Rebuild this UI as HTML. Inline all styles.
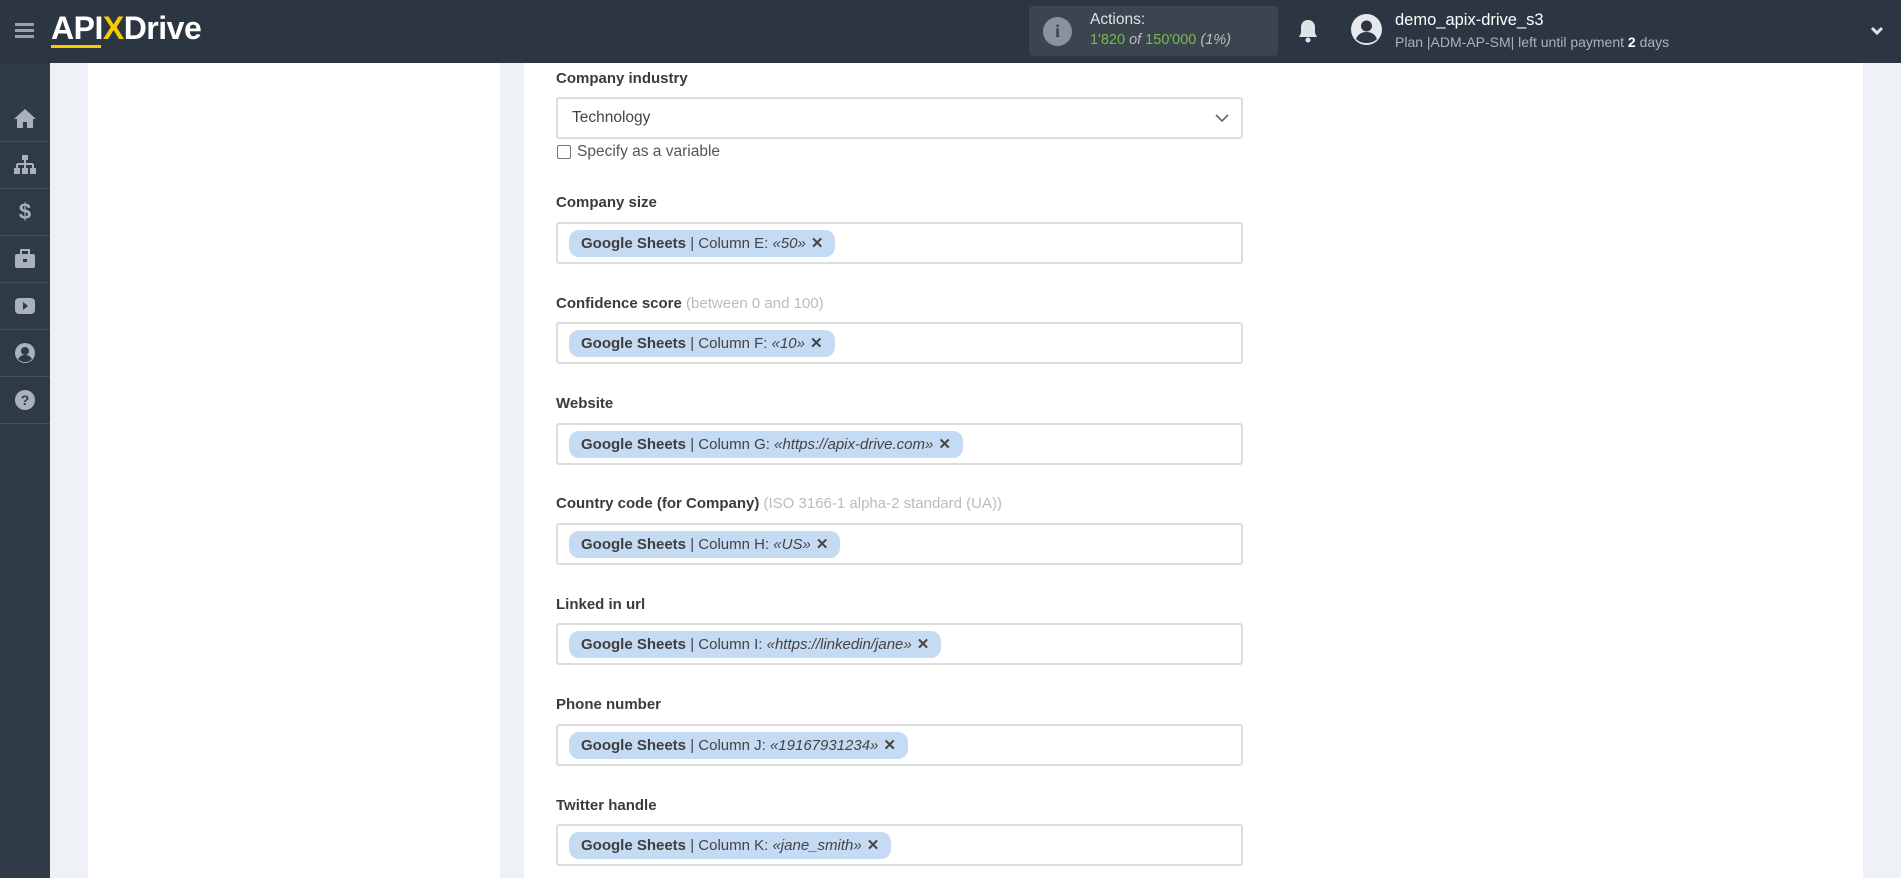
<!DOCTYPE html>
<html><head><meta charset="utf-8"><style>
*{box-sizing:border-box;margin:0;padding:0}
body{width:1901px;height:878px;overflow:hidden;background:#eef1f6;font-family:"Liberation Sans",sans-serif;position:relative}
.hdr{position:absolute;left:0;top:0;width:1901px;height:63px;background:#2c3643}
.side{position:absolute;left:0;top:63px;width:50px;height:815px;background:#2f3a47}
.side .it{position:absolute;left:0;width:50px;height:47px;border-bottom:1px solid #415060;display:flex;align-items:center;justify-content:center}
.lp{position:absolute;left:88px;top:63px;width:412px;height:815px;background:#fff}
.rp{position:absolute;left:524px;top:63px;width:1339px;height:815px;background:#fff}
.lbl{position:absolute;left:556px;font-size:15px;font-weight:bold;color:#3b3b3b}
.lbl span{font-weight:normal;color:#bbb}
.box{position:absolute;left:556px;width:687px;height:42px;border:2px solid #ddd;border-radius:3px;background:#fff}
.chip{position:absolute;left:11px;top:6px;height:27px;line-height:27px;background:#c5daf3;border-radius:10px;padding:0 12px;font-size:15px;color:#444;white-space:nowrap}
.chip b{color:#3e3e3e}
.chip i{font-style:italic}
.chip .x{font-weight:bold;margin-left:5px}
</style></head><body>
<div class="hdr">
  <div style="position:absolute;left:15px;top:23px;width:19px;height:3px;background:#9aa3ad;box-shadow:0 6px 0 #9aa3ad,0 12px 0 #9aa3ad"></div>
  <div style="position:absolute;left:51px;top:10px;font-size:32px;font-weight:bold;color:#fff;letter-spacing:-0.5px">API<span style="color:#f5cc00">X</span>Drive</div>
  <div style="position:absolute;left:51px;top:45px;width:50px;height:3px;background:#f5cc00"></div>
  <div style="position:absolute;left:1029px;top:6px;width:249px;height:50px;background:#3a4550;border-radius:4px">
    <div style="position:absolute;left:14px;top:11px;width:29px;height:29px;border-radius:50%;background:#8a939c;color:#3a4550;font-weight:bold;text-align:center;line-height:29px;font-size:18px;font-family:'Liberation Serif',serif">i</div>
    <div style="position:absolute;left:61px;top:5px;color:#dfe3e7;font-size:15.5px">Actions:</div>
    <div style="position:absolute;left:61px;top:26px;color:#7cb84a;font-size:14.5px">1'820 <i style="color:#bbb">of</i> 150'000 <i style="color:#bbb">(1%)</i></div>
  </div>
  <svg style="position:absolute;left:1298px;top:19px" width="20" height="24" viewBox="0 0 20 24"><path d="M10 1c-4 0-7 3-7 7v6l-2 4h18l-2-4V8c0-4-3-7-7-7z" fill="#dfe3e7"/><circle cx="10" cy="21" r="2.5" fill="#dfe3e7"/></svg>
  <svg style="position:absolute;left:1351px;top:14px" width="31" height="31" viewBox="0 0 31 31"><circle cx="15.5" cy="15.5" r="15.5" fill="#e6e9ec"/><circle cx="15.5" cy="12" r="5.5" fill="#2c3643"/><path d="M5 25c2-5 6-7 10.5-7s8.5 2 10.5 7c-3 3-6.5 4-10.5 4S8 28 5 25z" fill="#2c3643"/></svg>
  <div style="position:absolute;left:1395px;top:11px;color:#fff;font-size:16.5px">demo_apix-drive_s3</div>
  <div style="position:absolute;left:1395px;top:34px;color:#aab2bb;font-size:14px">Plan |ADM-AP-SM| left until payment <b style="color:#fff">2</b> days</div>
  <svg style="position:absolute;left:1870px;top:26px" width="14" height="10" viewBox="0 0 14 10"><path d="M2 2l5 5 5-5" stroke="#dfe3e7" stroke-width="3" fill="none"/></svg>
</div>
<div class="side">
  <div class="it" style="top:32px"><svg width="24" height="22" viewBox="0 0 24 22"><path d="M12 2L1 12h3v9h6v-6h4v6h6v-9h3z" fill="#a9b1ba"/></svg></div>
  <div class="it" style="top:79px"><svg width="24" height="22" viewBox="0 0 24 22"><rect x="9" y="1" width="6" height="5" fill="#a9b1ba"/><path d="M12 6v4M4 10h16M4 10v5M12 10v5M20 10v5" stroke="#a9b1ba" stroke-width="2"/><rect x="1" y="14" width="6" height="6" fill="#a9b1ba"/><rect x="9" y="14" width="6" height="6" fill="#a9b1ba"/><rect x="17" y="14" width="6" height="6" fill="#a9b1ba"/></svg></div>
  <div class="it" style="top:126px;color:#a9b1ba;font-weight:bold;font-size:22px">$</div>
  <div class="it" style="top:173px"><svg width="22" height="20" viewBox="0 0 22 20"><rect x="7" y="1" width="8" height="5" fill="none" stroke="#a9b1ba" stroke-width="2"/><rect x="1" y="5" width="20" height="14" rx="2" fill="#a9b1ba"/><rect x="9" y="10" width="4" height="3" fill="#2f3a47"/></svg></div>
  <div class="it" style="top:220px"><svg width="22" height="18" viewBox="0 0 22 18"><rect x="1" y="1" width="20" height="16" rx="4" fill="#a9b1ba"/><path d="M9 5l5 4-5 4z" fill="#2f3a47"/></svg></div>
  <div class="it" style="top:267px"><svg width="22" height="22" viewBox="0 0 22 22"><circle cx="11" cy="11" r="10" fill="#a9b1ba"/><circle cx="11" cy="9" r="4" fill="#2f3a47"/><path d="M4 17c2-3 4-4 7-4s5 1 7 4c-2 2-4 3-7 3s-5-1-7-3z" fill="#2f3a47"/></svg></div>
  <div class="it" style="top:314px"><svg width="22" height="22" viewBox="0 0 22 22"><circle cx="11" cy="11" r="10" fill="#a9b1ba"/><text x="11" y="16" font-size="14" font-weight="bold" text-anchor="middle" fill="#2f3a47" font-family="Liberation Sans">?</text></svg></div>
</div>
<div class="lp"></div>
<div class="rp"></div>

<div class="lbl" style="top:70px">Company industry</div>
<div class="box" style="top:97px"><div style="position:absolute;left:14px;top:10px;font-size:15.5px;color:#444">Technology</div>
<svg style="position:absolute;right:12px;top:15px" width="14" height="9" viewBox="0 0 14 9"><path d="M1 1l6 6 6-6" stroke="#666" stroke-width="1.6" fill="none"/></svg></div>
<div style="position:absolute;left:557px;top:145px;width:14px;height:14px;border:1.5px solid #777;border-radius:2px"></div>
<div style="position:absolute;left:577px;top:143px;font-size:15.5px;color:#555">Specify as a variable</div>

<div class="lbl" style="top:194px">Company size</div>
<div class="box" style="top:222px"><div class="chip"><b>Google Sheets</b> | Column E: <i>«50»</i><span class="x">✕</span></div></div>

<div class="lbl" style="top:295px">Confidence score <span>(between 0 and 100)</span></div>
<div class="box" style="top:322px"><div class="chip"><b>Google Sheets</b> | Column F: <i>«10»</i><span class="x">✕</span></div></div>

<div class="lbl" style="top:395px">Website</div>
<div class="box" style="top:423px"><div class="chip"><b>Google Sheets</b> | Column G: <i>«https://apix-drive.com»</i><span class="x">✕</span></div></div>

<div class="lbl" style="top:495px">Country code (for Company) <span>(ISO 3166-1 alpha-2 standard (UA))</span></div>
<div class="box" style="top:523px"><div class="chip"><b>Google Sheets</b> | Column H: <i>«US»</i><span class="x">✕</span></div></div>

<div class="lbl" style="top:596px">Linked in url</div>
<div class="box" style="top:623px"><div class="chip"><b>Google Sheets</b> | Column I: <i>«https://linkedin/jane»</i><span class="x">✕</span></div></div>

<div class="lbl" style="top:696px">Phone number</div>
<div class="box" style="top:724px"><div class="chip"><b>Google Sheets</b> | Column J: <i>«19167931234»</i><span class="x">✕</span></div></div>

<div class="lbl" style="top:797px">Twitter handle</div>
<div class="box" style="top:824px"><div class="chip"><b>Google Sheets</b> | Column K: <i>«jane_smith»</i><span class="x">✕</span></div></div>
</body></html>
